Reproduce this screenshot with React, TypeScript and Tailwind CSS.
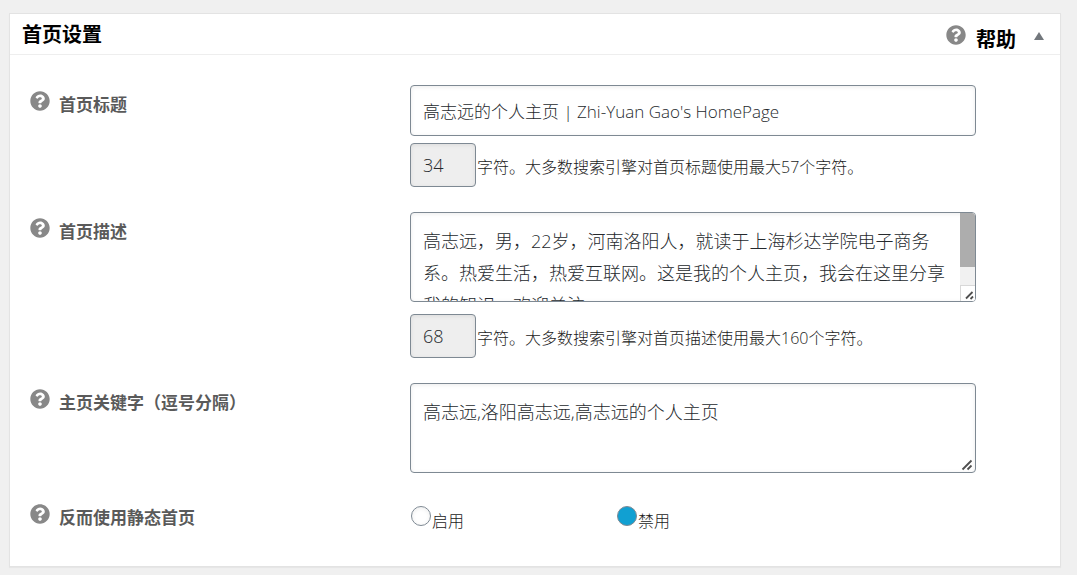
import { useState, type ReactNode } from "react";
import { FaQuestionCircle } from "react-icons/fa";

const field =
  "block rounded border border-[#7e8993] bg-white px-3 font-light text-[#25292d] shadow-[inset_0_1px_4px_rgba(0,0,0,0.08)] outline-none";

const area = field + " h-[90px] w-full resize-none py-3 text-lg leading-8";

function HelpButton({ label }: { label: string }) {
  return (
    <button type="button" aria-label={label} className="block shrink-0 text-[#888]">
      <FaQuestionCircle className="size-5" />
    </button>
  );
}

function Row({ label, htmlFor, children }: { label: string; htmlFor?: string; children: ReactNode }) {
  return (
    <div className="flex items-start">
      <div className="flex w-[380px] shrink-0 items-start gap-[9px] pt-[6px]">
        <HelpButton label={label} />
        <label htmlFor={htmlFor} id={htmlFor ? undefined : "static-label"} className="pt-[2px] text-[17px] leading-6 font-bold text-[#5a5a5a]">
          {label}
        </label>
      </div>
      <div className="min-w-0 flex-1">{children}</div>
    </div>
  );
}

function Counter({ id, value, children }: { id: string; value: number; children: ReactNode }) {
  return (
    <div className="flex items-center gap-px">
      <input id={id} readOnly value={value} className={`${field} h-11 w-[66px] bg-[#eee]! text-lg`} />
      <label htmlFor={id} className="pt-1 text-base font-light text-[#1a1a1a]">
        {children}
      </label>
    </div>
  );
}

function Choice({ label, checked, onChange }: { label: string; checked: boolean; onChange: () => void }) {
  return (
    <label className="flex w-[206px] items-start text-base leading-6 font-light text-[#1a1a1a]">
      <input
        type="radio"
        name="static"
        checked={checked}
        onChange={onChange}
        className="mr-px size-5 appearance-none rounded-full border border-[#7e8993] bg-white shadow-[inset_0_1px_4px_rgba(0,0,0,0.08)] checked:bg-[#11a0d2] checked:shadow-none"
      />
      <span className="pt-[3px]">{label}</span>
    </label>
  );
}

function Grip({ small = false }: { small?: boolean }) {
  return (
    <svg viewBox="0 0 15 15" className="size-[15px]" fill="none" stroke="#505050" strokeWidth="1.8">
      <path d={small ? "M5 12.5L11.5 6M9.5 13L12 10.5" : "M2.5 12.5L11.5 3.5M7.5 12.5L11.5 8.5"} />
    </svg>
  );
}

export default function App() {
  const [title, setTitle] = useState("高志远的个人主页 | Zhi-Yuan Gao's HomePage");
  const [description, setDescription] = useState(
    "高志远，男，22岁，河南洛阳人，就读于上海杉达学院电子商务系。热爱生活，热爱互联网。这是我的个人主页，我会在这里分享我的知识，欢迎关注。"
  );
  const [keywords, setKeywords] = useState("高志远,洛阳高志远,高志远的个人主页");
  const [useStatic, setUseStatic] = useState(false);

  return (
    <main className="min-h-screen bg-[#f0f0f0] pt-[13px] pr-4 pb-2 pl-[9px] font-['Open_Sans','Noto_Sans_CJK_SC',sans-serif]">
      <section className="border border-[#e3e3e3] bg-white shadow-[0_1px_1px_rgba(0,0,0,0.04)]">
        <header className="flex h-[41px] items-center border-b border-[#eee] pr-4 pl-3">
          <h2 className="flex-1 pt-[2px] text-xl font-bold text-black">首页设置</h2>
          <div className="pt-[2px]">
            <HelpButton label="帮助" />
          </div>
          <a href="#help" className="mr-[18px] ml-[10px] pt-3 text-xl font-bold text-black">
            帮助
          </a>
          <button type="button" aria-label="收起" className="text-[#72777c]">
            <svg viewBox="0 0 10 8" className="mt-1 h-2 w-[10px]" fill="currentColor">
              <path d="M5 0L10 8H0z" />
            </svg>
          </button>
        </header>

        {/* campos */}
        <form className="flex flex-col gap-[25px] pt-[30px] pr-[84px] pb-[33px] pl-5">
          <Row label="首页标题" htmlFor="title">
            <div className="flex flex-col gap-[7px]">
              <input id="title" value={title} onChange={(e) => setTitle(e.target.value)} className={`${field} h-[51px] w-full text-[17px]`} />
              <Counter id="title-count" value={34}>
                字符。大多数搜索引擎对首页标题使用最大57个字符。
              </Counter>
            </div>
          </Row>
          <Row label="首页描述" htmlFor="description">
            <div className="flex flex-col gap-3">
              <div className="relative">
                <textarea id="description" value={description} onChange={(e) => setDescription(e.target.value)} className={`${area} pr-7!`} />
                {/* barra de rolagem */}
                <div aria-hidden="true" className="pointer-events-none absolute inset-y-px right-px flex w-[15px] flex-col overflow-hidden rounded-r-[3px] bg-[#f1f1f1]">
                  <div className="h-[54px] bg-[#adadad]" />
                  <div className="mt-auto border-t border-l border-[#d8d8d8] bg-white">
                    <Grip small />
                  </div>
                </div>
              </div>
              <Counter id="description-count" value={68}>
                字符。大多数搜索引擎对首页描述使用最大160个字符。
              </Counter>
            </div>
          </Row>
          <Row label="主页关键字（逗号分隔）" htmlFor="keywords">
            <div className="relative">
              <textarea id="keywords" value={keywords} onChange={(e) => setKeywords(e.target.value)} className={area} />
              <div aria-hidden="true" className="pointer-events-none absolute right-px bottom-px">
                <Grip />
              </div>
            </div>
          </Row>
          <Row label="反而使用静态首页">
            <div role="radiogroup" aria-labelledby="static-label" className="flex pt-2 pl-px">
              <Choice label="启用" checked={useStatic} onChange={() => setUseStatic(true)} />
              <Choice label="禁用" checked={!useStatic} onChange={() => setUseStatic(false)} />
            </div>
          </Row>
        </form>
      </section>
    </main>
  );
}
